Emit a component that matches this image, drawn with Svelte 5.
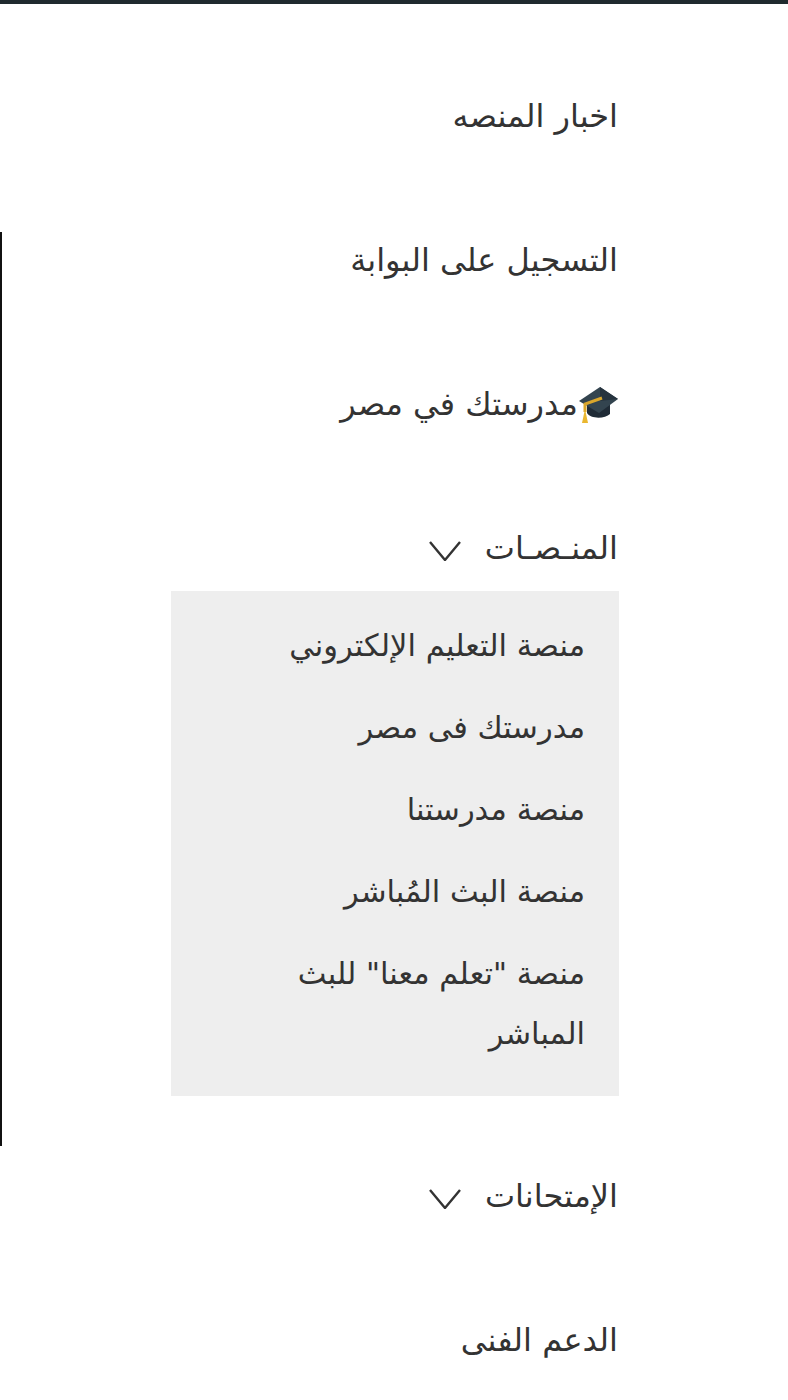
<script lang="ts">
  // Mobile nav drawer, RTL. "المنصات" is shown open, as in the capture.
  const subItems = [
    'منصة التعليم الإلكتروني',
    'مدرستك فى مصر',
    'منصة مدرستنا',
    'منصة البث المُباشر',
    'منصة "تعلم معنا" للبث المباشر',
  ];
</script>

<div class="page" dir="rtl">
  <div class="edge-line" aria-hidden="true"></div>
  <ul class="nav">
    <li><a href="#news">اخبار المنصه</a></li>
    <li><a href="#portal">التسجيل على البوابة</a></li>
    <li>
      <a href="#school">
        <svg class="cap" viewBox="0 0 40 40" aria-hidden="true">
          <path d="M9 19v10c3 6 18 6 23 1V19z" fill="#1f2b36" />
          <path d="M22 3 40 15 21 29 1 17z" fill="#33444f" />
          <path d="M22 3 40 15 22 17z" fill="#26333e" />
          <path d="M24 14 7 20v8" fill="none" stroke="#d9a62c" stroke-width="3" />
          <path d="M7 25 10 39H4z" fill="#eab72f" />
        </svg>مدرستك في مصر
      </a>
    </li>
    <li>
      <a href="#platforms">
        المنـصـات
        <svg class="chev" viewBox="0 0 32 20" aria-hidden="true">
          <path d="M1 1 16 19 31 1" />
        </svg>
      </a>
      <ul class="sub">
        {#each subItems as item}
          <li><a href="#sub">{item}</a></li>
        {/each}
      </ul>
    </li>
    <li>
      <a href="#exams">
        الإمتحانات
        <svg class="chev" viewBox="0 0 32 20" aria-hidden="true">
          <path d="M1 1 16 19 31 1" />
        </svg>
      </a>
    </li>
    <li><a href="#support">الدعم الفنى</a></li>
  </ul>
</div>

<style>
  :global(body) {
    margin: 0;
    background: #fff;
  }
  .page {
    position: relative;
    height: 1400px;
    box-sizing: border-box;
    border-top: 4px solid #1f2a2e;
    padding: 80px 170px 0 171px;
    overflow: hidden;
    font-family: 'DejaVu Sans', sans-serif;
    color: #333;
  }
  .edge-line {
    position: absolute;
    left: 0;
    top: 228px;
    width: 2px;
    height: 914px;
    background: #111;
  }
  ul {
    list-style: none;
    margin: 0;
    padding: 0;
  }
  a {
    color: inherit;
    text-decoration: none;
  }
  .nav {
    display: flex;
    flex-direction: column;
    gap: 80px;
    font-size: 32px;
    line-height: 64px;
  }
  .nav > li > a {
    display: flex;
    align-items: center;
    height: 64px;
    white-space: nowrap;
  }
  .cap {
    width: 40px;
    height: 40px;
    flex: none;
  }
  .chev {
    width: 32px;
    height: 20px;
    flex: none;
    margin-right: 24px;
    margin-top: 6px;
    fill: none;
    stroke: #333;
    stroke-width: 2.4;
  }
  .sub {
    display: flex;
    flex-direction: column;
    gap: 22px;
    margin: 11px -1px -12px 0;
    padding: 25px 34px 32px 35px;
    background: #eee;
    font-size: 30.5px;
    line-height: 60px;
  }
</style>
